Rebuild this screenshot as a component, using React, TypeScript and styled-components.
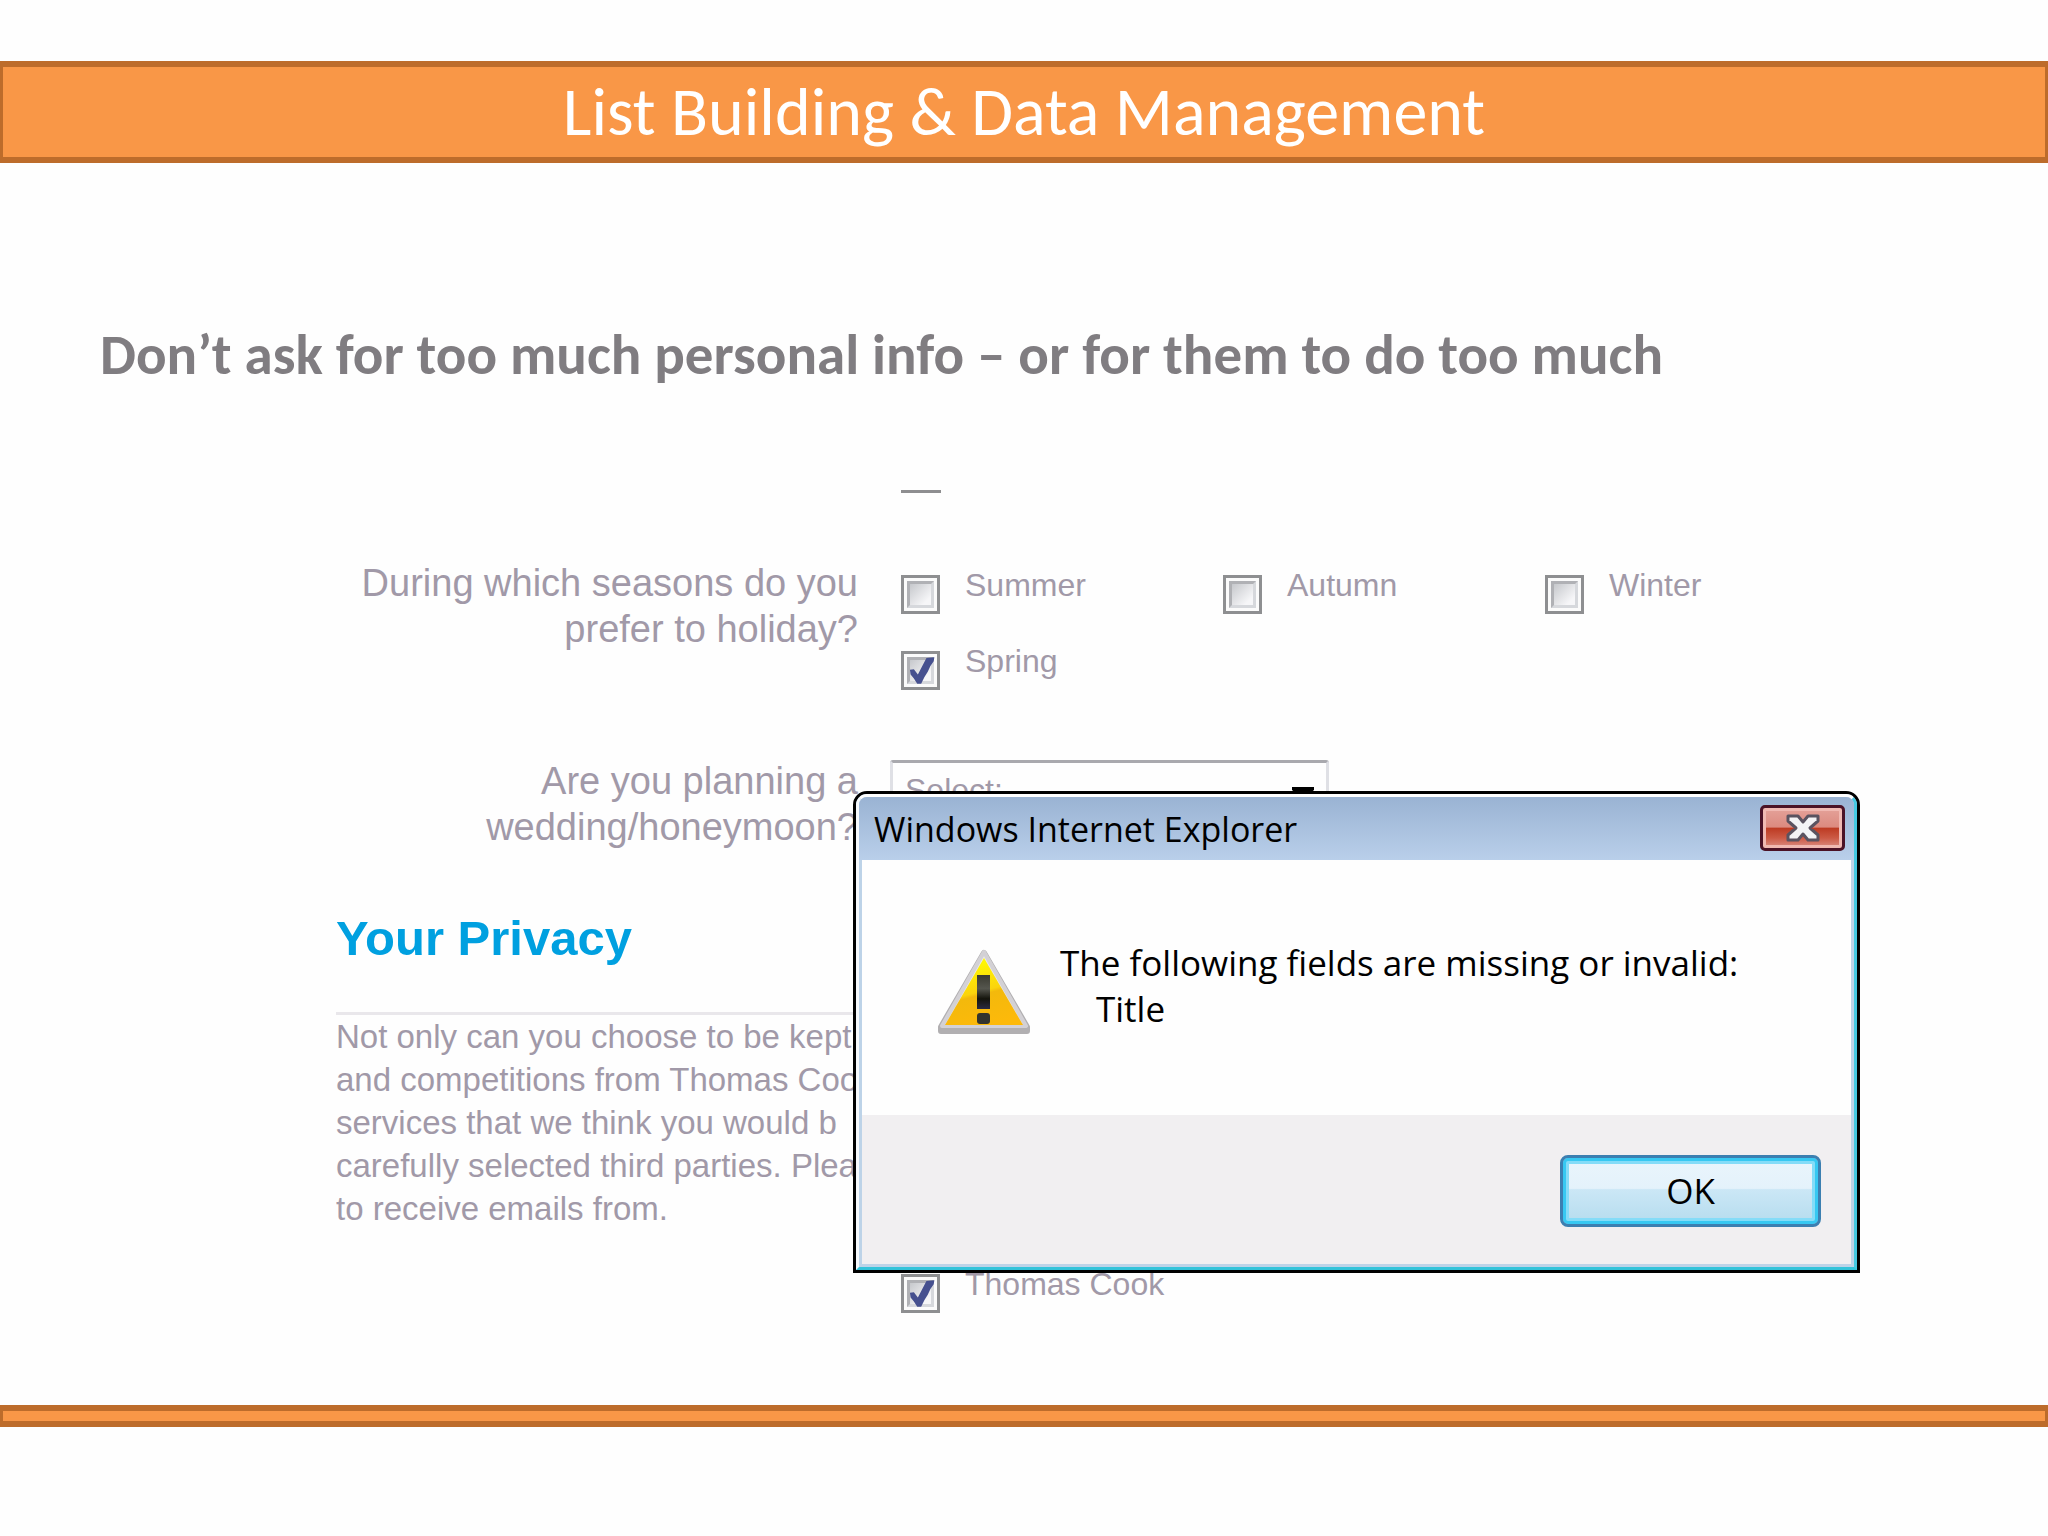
import React, { useState } from "react";
import styled, { createGlobalStyle } from "styled-components";

const GlobalStyle = createGlobalStyle`
  *, *::before, *::after { box-sizing: border-box; }
  body { margin: 0; background: #fefefe; }
  h1, h2, h3, p, fieldset { margin: 0; padding: 0; border: 0; min-width: 0; }
`;

const slideFont = `Carlito, Lato, sans-serif`;
const formFont = `"Liberation Sans", Arial, sans-serif`;
const dialogFont = `"Open Sans", "Noto Sans", sans-serif`;

const Slide = styled.div`
  display: flex;
  flex-direction: column;
  min-height: 100vh;
  padding-top: 61px;
`;

const TitleBand = styled.header`
  border: solid #bd6c2b;
  border-width: 6px 3px;
  background: #f99747;
  text-align: center;
`;

const SlideTitle = styled.h1`
  font: 400 68px/90px ${slideFont};
  color: #fff;
`;

const BottomBand = styled.footer`
  height: 22px;
  margin-top: 70px;
  border: solid #bd6c2b;
  border-width: 6px 3px;
  background: #f99747;
`;

const Headline = styled.h2`
  padding: 161px 98px 105px 100px;
  font: 700 57px/61px ${slideFont};
  color: #807d81;
`;

const Form = styled.form`
  position: relative;
  margin-left: 336px;
  font-family: ${formFont};
  color: #a199a8;
`;

const Row = styled.div`
  display: grid;
  grid-template-columns: 522px 1fr;
  column-gap: 43px;
`;

const CutOffBox = styled.div`
  grid-column: 2;
  width: 40px;
  height: 3px;
  margin-bottom: 67px;
  background: #8e8e90;
`;

const SeasonsRow = styled(Row)`
  margin-bottom: 46px;
`;

const Question = styled.label`
  font-size: 38px;
  line-height: 46px;
  text-align: right;
`;

const Options = styled.div`
  display: grid;
  grid-template-columns: repeat(3, 322px);
  grid-auto-rows: 76px;
`;

const Option = styled.label`
  display: flex;
  align-items: flex-start;
  gap: 25px;
  font-size: 32px;
  line-height: 50px;
`;

const Tick = styled.input`
  appearance: none;
  position: relative;
  flex: none;
  width: 39px;
  height: 39px;
  margin: 15px 0 0;
  border: 3px solid #8e8f91;
  background: #fbfbfb;

  &::before {
    content: "";
    position: absolute;
    inset: 3px;
    border: 3px solid;
    border-color: #b0b1b5 #d6d8dc #d6d8dc #b0b1b5;
    background: linear-gradient(135deg, #c6c8cc, #f6f6f8 80%);
  }

  &:checked::after {
    content: "";
    position: absolute;
    inset: 0;
    background: #46508f;
    clip-path: polygon(18% 48%, 30% 46%, 42% 62%, 68% 12%, 92% 10%, 90% 22%, 80% 36%, 72% 54%, 62% 70%, 52% 90%, 40% 90%, 30% 74%, 20% 62%);
  }
`;

const SelectBox = styled.div`
  position: relative;
  width: 439px;
  margin: 2px 0 0 -11px;
`;

const Select = styled.select`
  appearance: none;
  width: 100%;
  height: 60px;
  padding: 0 12px;
  border: 3px solid #dfe0e5;
  border-top-color: #a9a9ae;
  border-radius: 3px;
  background: #fefefe;
  font: 32px ${formFont};
  color: #a199a8;
`;

const SelectArrow = styled.svg`
  position: absolute;
  right: 15px;
  top: 27px;
  width: 22px;
  height: 12px;
`;

const SectionTitle = styled.h3`
  padding: 59px 0 45px;
  font-size: 49px;
  line-height: 58px;
  color: #00a0e0;
`;

const PrivacyText = styled.p`
  width: 560px;
  border-top: 3px solid #e9e7eb;
  font-size: 33px;
  line-height: 43px;
  white-space: nowrap;
`;

const ConsentRow = styled(Row)`
  margin-top: 29px;
`;

const ConsentOptions = styled(Options)`
  grid-column: 2;
`;

const Dialog = styled.section`
  position: absolute;
  left: 517px;
  top: 301px;
  width: 1007px;
  border: 3px solid #000;
  border-radius: 14px 14px 0 0;
  background: #b9cfe8;
  font-family: ${dialogFont};
  font-size: 35px;
  line-height: 46px;
  color: #000;
`;

const Glass = styled.div`
  border: 3px solid;
  border-color: #fff #45c9e2 #33c3da #f6f9fc;
  border-radius: 11px 11px 0 0;
`;

const DialogBar = styled.div`
  display: flex;
  align-items: flex-start;
  justify-content: space-between;
  height: 63px;
  padding: 8px 9px 0 15px;
  border-radius: 8px 8px 0 0;
  background: linear-gradient(#9ab3d3, #b9cfea);
`;

const DialogTitle = styled.h3`
  font-size: 34px;
  font-weight: 400;
  line-height: 48px;
`;

const CloseButton = styled.button`
  display: grid;
  place-items: center;
  width: 85px;
  height: 46px;
  padding: 0;
  border: 3px solid #4b1226;
  border-radius: 5px;
  background: linear-gradient(#e4a29a, #dc8a7f 48%, #bd3a22 50%, #cc5a45 75%, #dc9187);
  box-shadow: inset 0 0 0 3px #f0b9b2;
`;

const DialogContent = styled.div`
  border: solid #bdd3e8;
  border-width: 0 3px 3px;
  background: #fefefe;
`;

const Message = styled.div`
  display: flex;
  align-items: flex-start;
  gap: 29px;
  padding: 80px 75px;
`;

const WarningIcon = styled.svg`
  flex: none;
  width: 94px;
  height: 86px;
  margin-top: 9px;
`;

const Field = styled.span`
  display: block;
  padding-left: 36px;
`;

const Actions = styled.div`
  display: flex;
  justify-content: flex-end;
  padding: 40px 30px 37px;
  background: #f1eff1;
`;

const OkButton = styled.button`
  width: 261px;
  height: 72px;
  padding: 0;
  border: 3px solid #3c7fb1;
  border-radius: 8px;
  background: linear-gradient(#eaf5fc, #e4f2fb 46%, #cbe7f6 48%, #b5dcee);
  box-shadow: inset 0 0 0 3px #37c8f2, inset 0 0 0 6px #84dcf8;
  font: 35px/46px ${dialogFont};
  color: #000;
`;

const seasons = ["Summer", "Autumn", "Winter", "Spring"];

export default function App() {
  const [picked, setPicked] = useState<string[]>(["Spring", "Thomas Cook"]);
  const toggle = (name: string) =>
    setPicked((all) => (all.includes(name) ? all.filter((n) => n !== name) : [...all, name]));

  const option = (name: string) => (
    <Option key={name}>
      <Tick type="checkbox" checked={picked.includes(name)} onChange={() => toggle(name)} />
      {name}
    </Option>
  );

  return (
    <>
      <GlobalStyle />
      <Slide>
        <TitleBand>
          <SlideTitle>List Building &amp; Data Management</SlideTitle>
        </TitleBand>
        <Headline>Don’t ask for too much personal info – or for them to do too much</Headline>
        <Form onSubmit={(e) => e.preventDefault()}>
          <Row>
            <CutOffBox />
          </Row>
          <SeasonsRow role="group" aria-labelledby="seasons">
            <Question as="div" id="seasons">
              During which seasons do you
              <br />
              prefer to holiday?
            </Question>
            <Options>{seasons.map(option)}</Options>
          </SeasonsRow>
          <Row>
            <Question htmlFor="wedding">
              Are you planning a
              <br />
              wedding/honeymoon?
            </Question>
            <SelectBox>
              <Select id="wedding">
                <option>Select:</option>
              </Select>
              <SelectArrow viewBox="0 0 22 12">
                <path d="M0 0H22V3L11 12L0 3Z" fill="#000" />
              </SelectArrow>
            </SelectBox>
          </Row>
          <SectionTitle>Your Privacy</SectionTitle>
          <PrivacyText>
            Not only can you choose to be kept
            <br />
            and competitions from Thomas Coo
            <br />
            services that we think you would b
            <br />
            carefully selected third parties. Plea
            <br />
            to receive emails from.
          </PrivacyText>
          <ConsentRow>
            <ConsentOptions>{option("Thomas Cook")}</ConsentOptions>
          </ConsentRow>

          <Dialog role="alertdialog" aria-labelledby="dialog-title">
            <Glass>
              <DialogBar>
                <DialogTitle id="dialog-title">Windows Internet Explorer</DialogTitle>
                <CloseButton type="button" aria-label="Close">
                  <svg width="34" height="28" viewBox="0 0 34 28">
                    <path
                      d="M2 2H12L17 8L22 2H32V7L24 14L32 21V26H22L17 20L12 26H2V21L10 14L2 7Z"
                      fill="#f3f3f5"
                      stroke="#5a5360"
                      strokeWidth="3"
                      strokeLinejoin="round"
                    />
                  </svg>
                </CloseButton>
              </DialogBar>
              <DialogContent>
                <Message>
                  <WarningIcon viewBox="0 0 94 86">
                    <defs>
                      <linearGradient id="amber" x1="0.3" y1="0" x2="0.6" y2="1">
                        <stop offset="0" stopColor="#ffff00" />
                        <stop offset="0.5" stopColor="#fbd40c" />
                        <stop offset="0.55" stopColor="#f3b90c" />
                        <stop offset="1" stopColor="#fdb90a" />
                      </linearGradient>
                      <linearGradient id="mark" x1="0" y1="0" x2="0" y2="1">
                        <stop offset="0" stopColor="#3a3a30" />
                        <stop offset="0.4" stopColor="#55564e" />
                        <stop offset="0.7" stopColor="#14140c" />
                        <stop offset="1" stopColor="#2a2a40" />
                      </linearGradient>
                    </defs>
                    <path d="M47 4L90 78V82H4V78Z" fill="#a9a7a7" stroke="#b1afb1" strokeWidth="6" strokeLinejoin="round" />
                    <path d="M47 3L89 77H5Z" fill="#e9e7ea" stroke="#d3d1d5" strokeWidth="4" strokeLinejoin="round" />
                    <path d="M47 9L86 76H8Z" fill="url(#amber)" />
                    <path d="M40 26H53V60H40Z" fill="url(#mark)" />
                    <rect x="40" y="64" width="13" height="11" rx="3" fill="#33342e" />
                  </WarningIcon>
                  <p>
                    The following fields are missing or invalid:
                    <Field>Title</Field>
                  </p>
                </Message>
                <Actions>
                  <OkButton type="button">OK</OkButton>
                </Actions>
              </DialogContent>
            </Glass>
          </Dialog>
        </Form>
        <BottomBand />
      </Slide>
    </>
  );
}
